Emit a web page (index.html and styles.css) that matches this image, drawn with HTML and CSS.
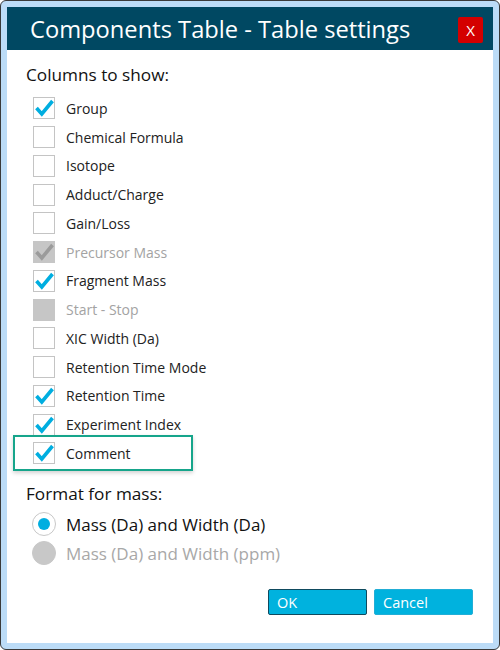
FILE: index.html
```html
<!DOCTYPE html>
<html>
<head>
<meta charset="utf-8">
<link rel="stylesheet" href="styles.css">
</head>
<body>
<div class="window">
  <div class="dialog">
    <div class="titlebar">
      <span class="title">Components Table - Table settings</span>
      <span class="close">X</span>
    </div>
    <div class="body">
      <div class="section-label">Columns to show:</div>
      <div class="checklist">
        <div class="row"><span class="box checked"><svg viewBox="0 0 22 22"><path d="M3.5 11 L8.8 17 L19.5 4"/></svg></span><span class="label">Group</span></div>
        <div class="row"><span class="box"></span><span class="label">Chemical Formula</span></div>
        <div class="row"><span class="box"></span><span class="label">Isotope</span></div>
        <div class="row"><span class="box"></span><span class="label">Adduct/Charge</span></div>
        <div class="row"><span class="box"></span><span class="label">Gain/Loss</span></div>
        <div class="row disabled"><span class="box checked"><svg viewBox="0 0 22 22"><path d="M3.5 11 L8.8 17 L19.5 4"/></svg></span><span class="label">Precursor Mass</span></div>
        <div class="row"><span class="box checked"><svg viewBox="0 0 22 22"><path d="M3.5 11 L8.8 17 L19.5 4"/></svg></span><span class="label">Fragment Mass</span></div>
        <div class="row disabled"><span class="box"></span><span class="label">Start - Stop</span></div>
        <div class="row"><span class="box"></span><span class="label">XIC Width (Da)</span></div>
        <div class="row"><span class="box"></span><span class="label">Retention Time Mode</span></div>
        <div class="row"><span class="box checked"><svg viewBox="0 0 22 22"><path d="M3.5 11 L8.8 17 L19.5 4"/></svg></span><span class="label">Retention Time</span></div>
        <div class="row"><span class="box checked"><svg viewBox="0 0 22 22"><path d="M3.5 11 L8.8 17 L19.5 4"/></svg></span><span class="label">Experiment Index</span></div>
        <div class="row"><span class="box checked"><svg viewBox="0 0 22 22"><path d="M3.5 11 L8.8 17 L19.5 4"/></svg></span><span class="label">Comment</span><span class="highlight"></span></div>
      </div>
      <div class="section-label format">Format for mass:</div>
      <div class="radios">
        <div class="radio-row"><span class="radio selected"></span><span class="radio-label">Mass (Da) and Width (Da)</span></div>
        <div class="radio-row disabled"><span class="radio"></span><span class="radio-label">Mass (Da) and Width (ppm)</span></div>
      </div>
      <div class="buttons">
        <button class="btn ok">OK</button>
        <button class="btn">Cancel</button>
      </div>
    </div>
  </div>
</div>
</body>
</html>
```
FILE: styles.css
```css
* { box-sizing: border-box; }
html, body { margin: 0; padding: 0; background: #ffffff; }
body { font-family: "Open Sans", "Noto Sans", sans-serif; color: #1e1e1e; }

.window {
  width: 500px;
  height: 650px;
  border: 1px solid #3a3a3a;
  border-radius: 6px;
  background: #bcdcf7;
  padding: 6px;
}
.dialog {
  background: #ffffff;
  height: 100%;
  display: flex;
  flex-direction: column;
}
.titlebar {
  height: 43px;
  background: #004862;
  display: flex;
  align-items: center;
  justify-content: space-between;
  padding: 0 10px 0 23px;
}
.title {
  color: #ffffff;
  font-size: 23.7px;
}
.close {
  width: 25px;
  height: 26px;
  background: #d40000;
  border-radius: 2px;
  color: #ffffff;
  font-size: 15px;
  display: flex;
  align-items: center;
  justify-content: center;
  margin-top: 2px;
}
.body {
  flex: 1;
  display: flex;
  flex-direction: column;
  padding: 13px 20px 28px 19px;
}
.section-label {
  font-size: 17.2px;
  line-height: 24px;
  color: #111;
}
.checklist {
  margin-top: 7px;
  padding-left: 7px;
}
.row {
  height: 28.75px;
  display: flex;
  align-items: center;
  position: relative;
}
.box {
  width: 22px;
  height: 22px;
  border: 1.5px solid #c4c4c4;
  background: #ffffff;
  flex: none;
  display: flex;
  align-items: center;
  justify-content: center;
}
.box svg { width: 22px; height: 22px; flex: none; }
.box path {
  fill: none;
  stroke: #00aee0;
  stroke-width: 3.6;
  stroke-linecap: butt;
  stroke-linejoin: miter;
}
.label {
  margin-left: 11px;
  font-size: 14px;
  color: #222;
}
.row.disabled .box { background: #c6c6c6; border-color: #c6c6c6; }
.row.disabled .box path { stroke: #9b9b9b; }
.row.disabled .label { color: #a3a3a3; }

.highlight {
  position: absolute;
  left: -20px;
  top: -4px;
  width: 180px;
  height: 36px;
  border: 2.5px solid #16a58b;
  box-shadow: 0 2px 4px rgba(0,0,0,0.18);
  pointer-events: none;
}

.format { margin-top: 14px; }
.radios {
  margin-top: 4px;
  padding-left: 6px;
}
.radio-row {
  height: 29px;
  display: flex;
  align-items: center;
}
.radio {
  width: 24px;
  height: 24px;
  border-radius: 50%;
  border: 1.5px solid #c8c8c8;
  background: #ffffff;
  flex: none;
  display: flex;
  align-items: center;
  justify-content: center;
}
.radio.selected::after {
  content: "";
  width: 12px;
  height: 12px;
  border-radius: 50%;
  background: #00aee0;
}
.radio-row.disabled .radio { background: #c8c8c8; border-color: #c8c8c8; }
.radio-label {
  margin-left: 10px;
  font-size: 17px;
  color: #111;
}
.radio-row.disabled .radio-label { color: #a8a8a8; }

.buttons {
  margin-top: auto;
  display: flex;
  justify-content: flex-end;
  gap: 7px;
}
.btn {
  width: 99px;
  height: 26px;
  background: #00b2de;
  border: 1px solid #22aed6;
  border-radius: 2px;
  color: #ffffff;
  font-family: "Open Sans", "Noto Sans", sans-serif;
  font-size: 14.5px;
  text-align: left;
  padding: 0 0 0 8px;
}
.btn.ok { border-color: #0f4a5e; }
```
